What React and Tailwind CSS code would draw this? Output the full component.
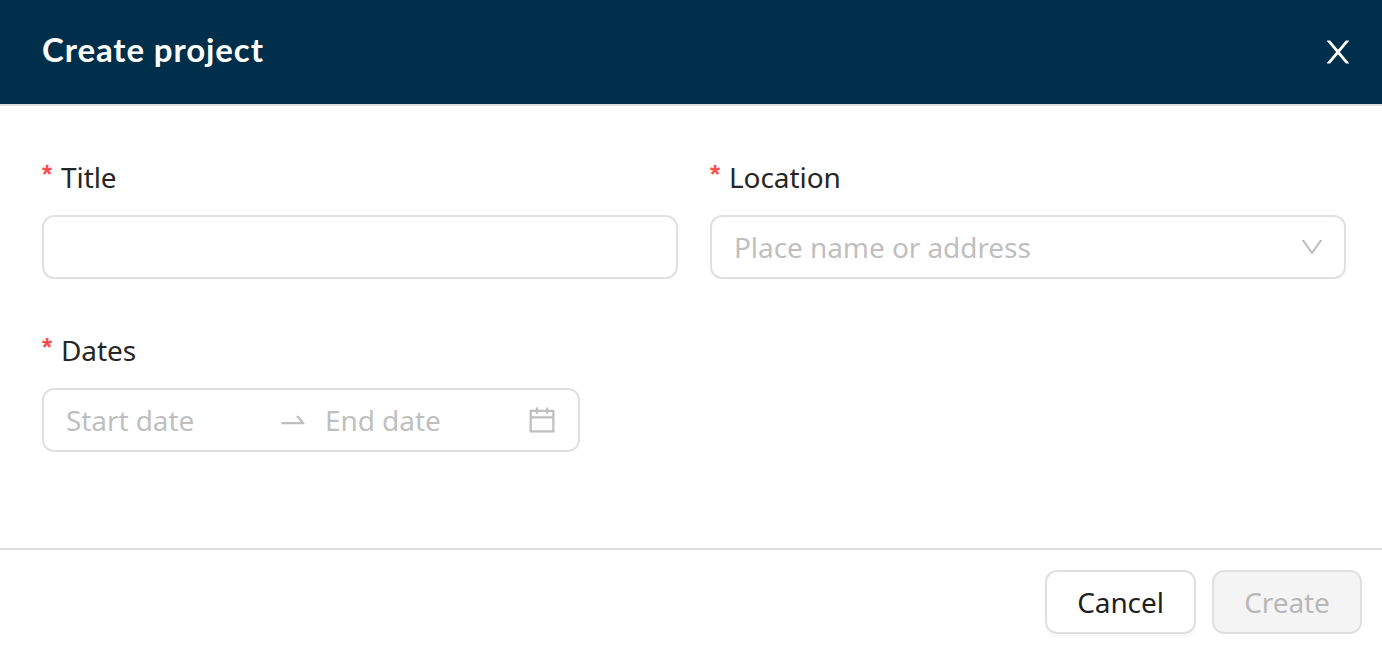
import React from "react";

function Icon({ d, className }) {
  return (
    <svg viewBox="0 0 1024 1024" fill="currentColor" className={className} aria-hidden="true">
      <path d={d} />
    </svg>
  );
}

const CLOSE =
  "M563.8 512l262.5-312.9c4.4-5.2.7-13.1-6.1-13.1h-79.8c-4.7 0-9.2 2.1-12.3 5.7L511.6 449.8 295.1 191.7c-3-3.6-7.5-5.7-12.3-5.7H203c-6.8 0-10.5 7.9-6.1 13.1L459.4 512 196.9 824.9A7.95 7.95 0 0 0 203 838h79.8c4.7 0 9.2-2.1 12.3-5.7l216.5-258.1 216.5 258.1c3 3.6 7.5 5.7 12.3 5.7h79.8c6.8 0 10.5-7.9 6.1-13.1L563.8 512z";
const DOWN =
  "M884 256h-75c-5.1 0-9.9 2.5-12.9 6.6L512 654.2 227.9 262.6c-3-4.1-7.8-6.6-12.9-6.6h-75c-6.5 0-10.3 7.4-6.5 12.7l352.6 486.1c12.8 17.6 39 17.6 51.7 0l352.6-486.1c3.9-5.3.1-12.7-6.4-12.7z";
const SWAP =
  "M873.1 596.2l-164-208A32 32 0 0 0 684 376h-64.8c-6.7 0-10.4 7.7-6.3 13l144.3 183H152c-4.4 0-8 3.6-8 8v60c0 4.4 3.6 8 8 8h695.9c26.8 0 41.7-30.8 25.2-51.8z";
const CALENDAR =
  "M880 184H712v-64c0-4.4-3.6-8-8-8h-56c-4.4 0-8 3.6-8 8v64H384v-64c0-4.4-3.6-8-8-8h-56c-4.4 0-8 3.6-8 8v64H144c-17.7 0-32 14.3-32 32v664c0 17.7 14.3 32 32 32h736c17.7 0 32-14.3 32-32V216c0-17.7-14.3-32-32-32zm-40 656H184V460h656v380zM184 392V256h128v48c0 4.4 3.6 8 8 8h56c4.4 0 8-3.6 8-8v-48h256v48c0 4.4 3.6 8 8 8h56c4.4 0 8-3.6 8-8v-48h128v136H184z";

function Label({ children }) {
  return (
    <div className="flex h-11 items-center text-[#262626]">
      <span className="mr-2 w-[11px] pb-[7px] font-['Liberation_Sans',sans-serif] text-[26px] font-bold text-[#ff4d4f]">*</span>
      <span>{children}</span>
    </div>
  );
}

export default function App() {
  return (
    <div className="flex h-[648px] w-[1382px] flex-col bg-white font-['Noto_Sans',sans-serif] text-[28px] leading-[44px] tracking-[-0.07px]">
      <header className="flex h-[106px] items-center justify-between border-b-2 border-[#e0e0e0] bg-[#002f4c] pr-[26px] pl-[42px] text-white">
        <h1 className="pb-[6px] font-['Lato',sans-serif] text-[33px] font-bold tracking-[0.9px]">Create project</h1>
        <button aria-label="Close">
          <Icon d={CLOSE} className="size-9" />
        </button>
      </header>

      <main className="flex-1 pt-[49px] pr-9 pl-[42px]">
        <div className="flex gap-8">
          <div className="w-[636px]">
            <Label>Title</Label>
            <div className="mt-4 h-16 rounded-xl border-2 border-[#e0e0e0]" />
          </div>
          <div className="w-[636px]">
            <Label>Location</Label>
            <div className="mt-4 flex h-16 items-center justify-between rounded-xl border-2 border-[#e0e0e0] pr-[18px] pl-[22px] text-[#bfbfbf]">
              <span>Place name or address</span>
              <Icon d={DOWN} className="size-7" />
            </div>
          </div>
        </div>
        <div className="mt-[49px] w-[538px]">
          <Label>Dates</Label>
          <div className="mt-4 flex h-16 items-center rounded-xl border-2 border-[#e0e0e0] pl-[22px] text-[#bfbfbf]">
            <span className="w-[211px]">Start date</span>
            <Icon d={SWAP} className="size-8" />
            <span className="ml-4 w-[201px]">End date</span>
            <Icon d={CALENDAR} className="size-8" />
          </div>
        </div>
      </main>

      <footer className="flex h-[100px] justify-end gap-4 border-t-2 border-[#e0e0e0] pt-5 pr-5">
        <button className="flex h-16 w-[151px] items-center justify-center rounded-xl border-2 border-[#e0e0e0] bg-white text-[#1f1f1f] shadow-[0_4px_0_rgba(0,0,0,0.02)]">
          Cancel
        </button>
        <button disabled className="flex h-16 w-[150px] items-center justify-center rounded-xl border-2 border-[#e0e0e0] bg-[#f4f4f4] text-[#b8b8b8]">
          Create
        </button>
      </footer>
    </div>
  );
}
